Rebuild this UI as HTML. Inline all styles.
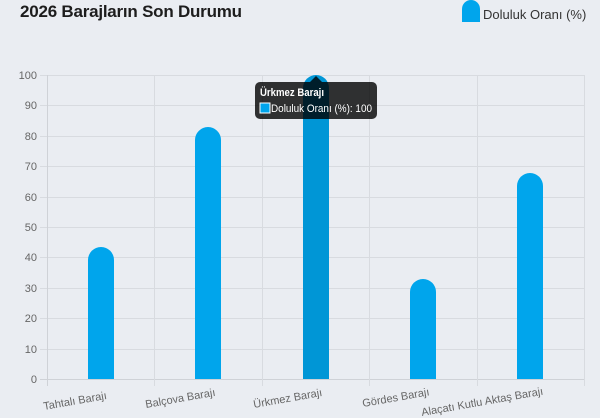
<!DOCTYPE html>
<html><head><meta charset="utf-8"><style>
html,body{margin:0;padding:0;background:#eaedf2;width:600px;height:418px;overflow:hidden}
svg{display:block}
</style></head><body>
<svg width="600" height="418" xmlns="http://www.w3.org/2000/svg" font-family="Liberation Sans, sans-serif">
<rect width="600" height="418" fill="#eaedf2"/>
<text x="20" y="17" font-size="17" font-weight="bold" fill="#1d1d1d" textLength="222">2026 Barajların Son Durumu</text>
<path d="M462 22 V9 a9 9 0 0 1 18 0 V22 Z" fill="#00a5ec"/>
<text x="483" y="19" font-size="13" fill="#333">Doluluk Oranı (%)</text>
<g stroke="#d8dbe0" stroke-width="1">
<line x1="40" y1="75.5" x2="585" y2="75.5"/>
<line x1="40" y1="105.5" x2="585" y2="105.5"/>
<line x1="40" y1="136.5" x2="585" y2="136.5"/>
<line x1="40" y1="166.5" x2="585" y2="166.5"/>
<line x1="40" y1="197.5" x2="585" y2="197.5"/>
<line x1="40" y1="227.5" x2="585" y2="227.5"/>
<line x1="40" y1="257.5" x2="585" y2="257.5"/>
<line x1="40" y1="288.5" x2="585" y2="288.5"/>
<line x1="40" y1="318.5" x2="585" y2="318.5"/>
<line x1="40" y1="349.5" x2="585" y2="349.5"/>
<line x1="40" y1="379.5" x2="585" y2="379.5" stroke="#cfd2d7"/>
<line x1="47.5" y1="75" x2="47.5" y2="386" stroke="#cfd2d7"/>
<line x1="154.5" y1="75" x2="154.5" y2="386"/>
<line x1="262.5" y1="75" x2="262.5" y2="386"/>
<line x1="369.5" y1="75" x2="369.5" y2="386"/>
<line x1="477.5" y1="75" x2="477.5" y2="386"/>
<line x1="584.5" y1="75" x2="584.5" y2="386"/>
</g>
<g font-size="11" fill="#666" text-anchor="end">
<text x="37" y="79">100</text><text x="37" y="109">90</text><text x="37" y="140">80</text>
<text x="37" y="170">70</text><text x="37" y="201">60</text><text x="37" y="231">50</text>
<text x="37" y="261">40</text><text x="37" y="292">30</text><text x="37" y="322">20</text>
<text x="37" y="353">10</text><text x="37" y="383">0</text>
</g>
<path d="M88 379 V260 a13 13 0 0 1 26 0 V379 Z" fill="#00a5ec"/>
<path d="M195 379 V140 a13 13 0 0 1 26 0 V379 Z" fill="#00a5ec"/>
<path d="M303 379 V88 a13 13 0 0 1 26 0 V379 Z" fill="#0096d6"/>
<path d="M410 379 V292 a13 13 0 0 1 26 0 V379 Z" fill="#00a5ec"/>
<path d="M517 379 V186 a13 13 0 0 1 26 0 V379 Z" fill="#00a5ec"/>
<g font-size="11" fill="#666">
<text transform="translate(44,410) rotate(-10)">Tahtalı Barajı</text>
<text transform="translate(146,408) rotate(-10)">Balçova Barajı</text>
<text transform="translate(254,408) rotate(-10)">Ürkmez Barajı</text>
<text transform="translate(363,407) rotate(-10)">Gördes Barajı</text>
<text transform="translate(422,416) rotate(-10)">Alaçatı Kutlu Aktaş Barajı</text>
</g>
<path d="M310 82 L316 76 L322 82 Z" fill="rgba(0,0,0,0.8)"/>
<rect x="255" y="82" width="122" height="37" rx="5" fill="rgba(0,0,0,0.8)"/>
<text x="260" y="96" font-size="11" font-weight="bold" fill="#fff" textLength="64" lengthAdjust="spacingAndGlyphs">Ürkmez Barajı</text>
<rect x="260" y="103" width="10" height="10" fill="#00a5ec" stroke="#fff" stroke-width="1"/>
<text x="271" y="112" font-size="11" fill="#fff" textLength="101" lengthAdjust="spacingAndGlyphs">Doluluk Oranı (%): 100</text>
</svg>
</body></html>
